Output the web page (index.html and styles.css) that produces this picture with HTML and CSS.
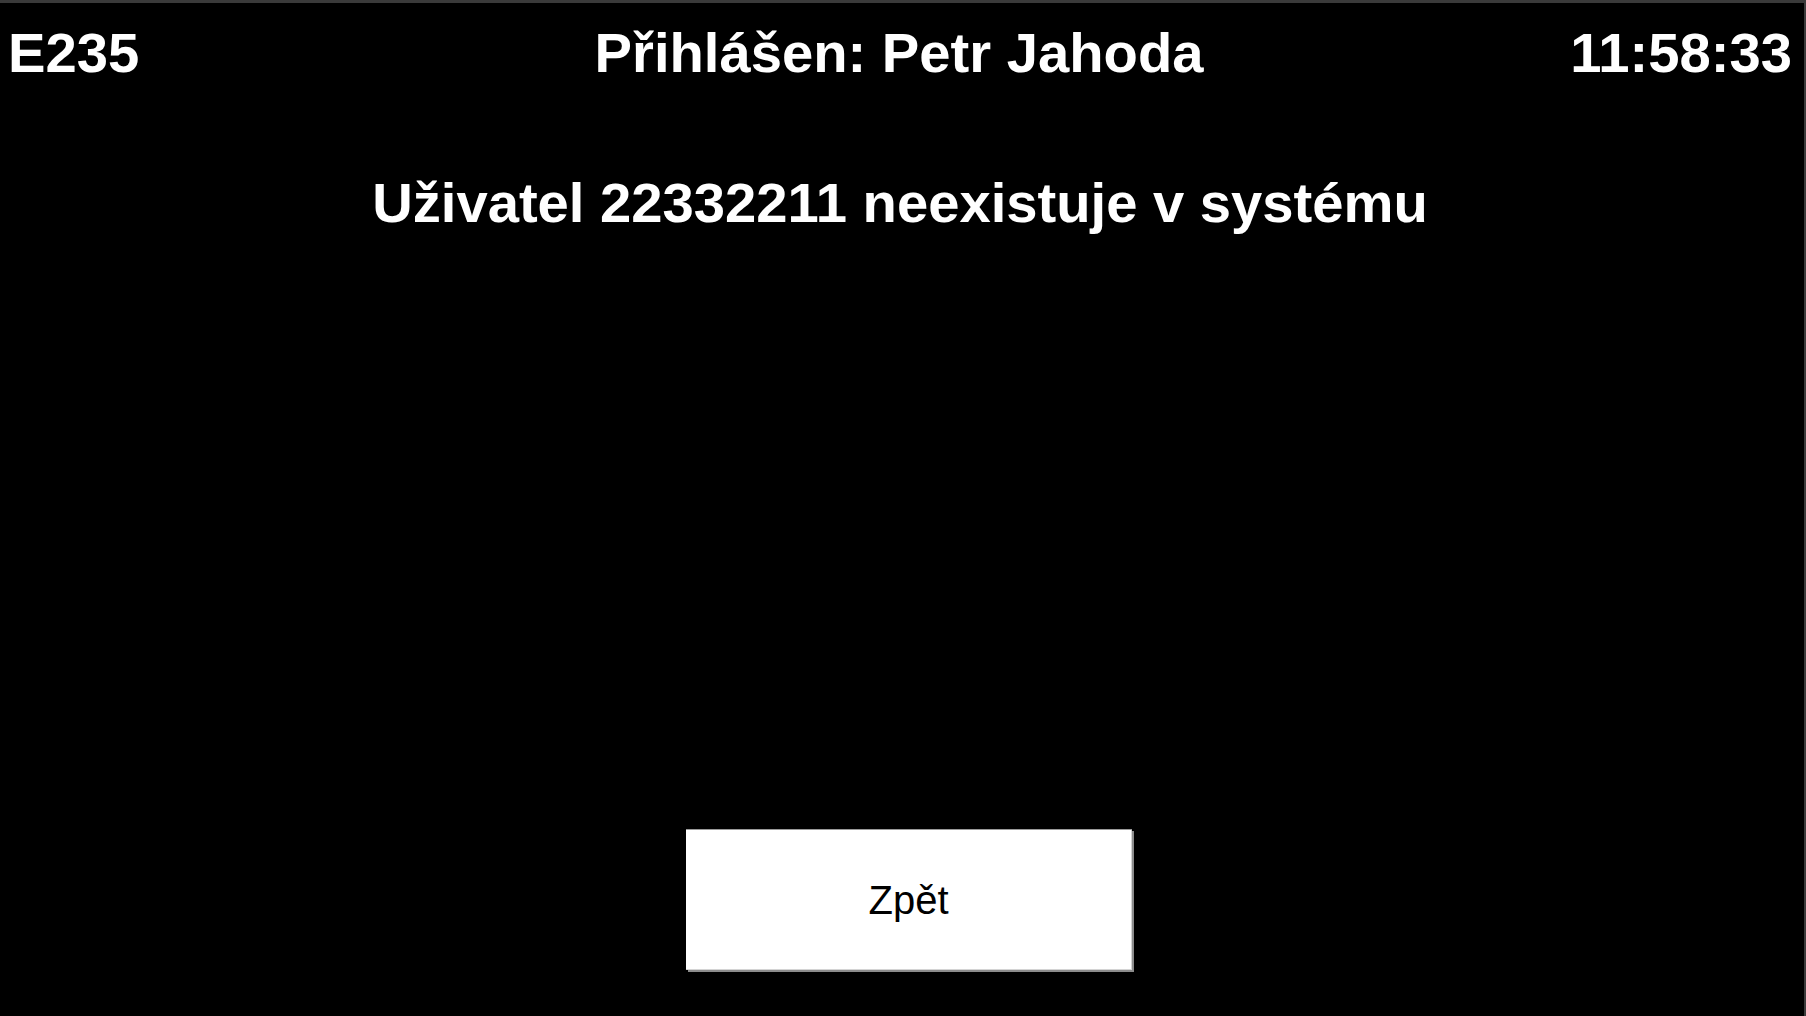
FILE: index.html
```html
<!DOCTYPE html>
<html lang="cs">
<head>
<meta charset="utf-8">
<title>E235</title>
<link rel="stylesheet" href="styles.css">
</head>
<body>
<div class="screen">
  <header class="topbar">
    <div class="station">E235</div>
    <div class="user">Přihlášen: Petr Jahoda</div>
    <div class="clock">11:58:33</div>
  </header>
  <main class="message">Uživatel 22332211 neexistuje v systému</main>
  <footer class="actions">
    <button class="back" type="button">Zpět</button>
  </footer>
</div>
</body>
</html>
```

FILE: styles.css
```css
html, body {
  margin: 0;
  padding: 0;
  height: 100%;
  background: #000;
}

.screen {
  box-sizing: border-box;
  height: 1016px;
  border-top: 3px solid #3a3a3a;
  border-right: 2px solid #3c3c3c;
  background: #000;
  color: #fff;
  font-family: "Liberation Sans", Arial, sans-serif;
  display: flex;
  flex-direction: column;
}

.topbar {
  display: grid;
  grid-template-columns: 1fr auto 1fr;
  align-items: start;
  padding: 18px 12px 0 8px;
  font-weight: bold;
  font-size: 56.2px;
  line-height: 64px;
}

.station { justify-self: start; }
.user { justify-self: center; margin-right: 2px; }
.clock { justify-self: end; }

.message {
  margin-top: 86px;
  text-align: center;
  font-weight: bold;
  font-size: 56.2px;
  line-height: 64px;
  padding-right: 4px;
}

.actions {
  margin-top: auto;
  display: flex;
  justify-content: center;
  padding: 0 0 46px 13px;
}

.back {
  box-sizing: border-box;
  width: 446px;
  height: 141px;
  background: #fff;
  color: #000;
  border: none;
  border-top: 1px solid #9a9a9a;
  box-shadow: inset -1px -1px 0 #d4d4d4, 2px 2px 0 0 #8c8c8c;
  margin: 0;
  padding: 0;
  font-family: "Liberation Sans", Arial, sans-serif;
  font-size: 40px;
  line-height: 46px;
}
```
